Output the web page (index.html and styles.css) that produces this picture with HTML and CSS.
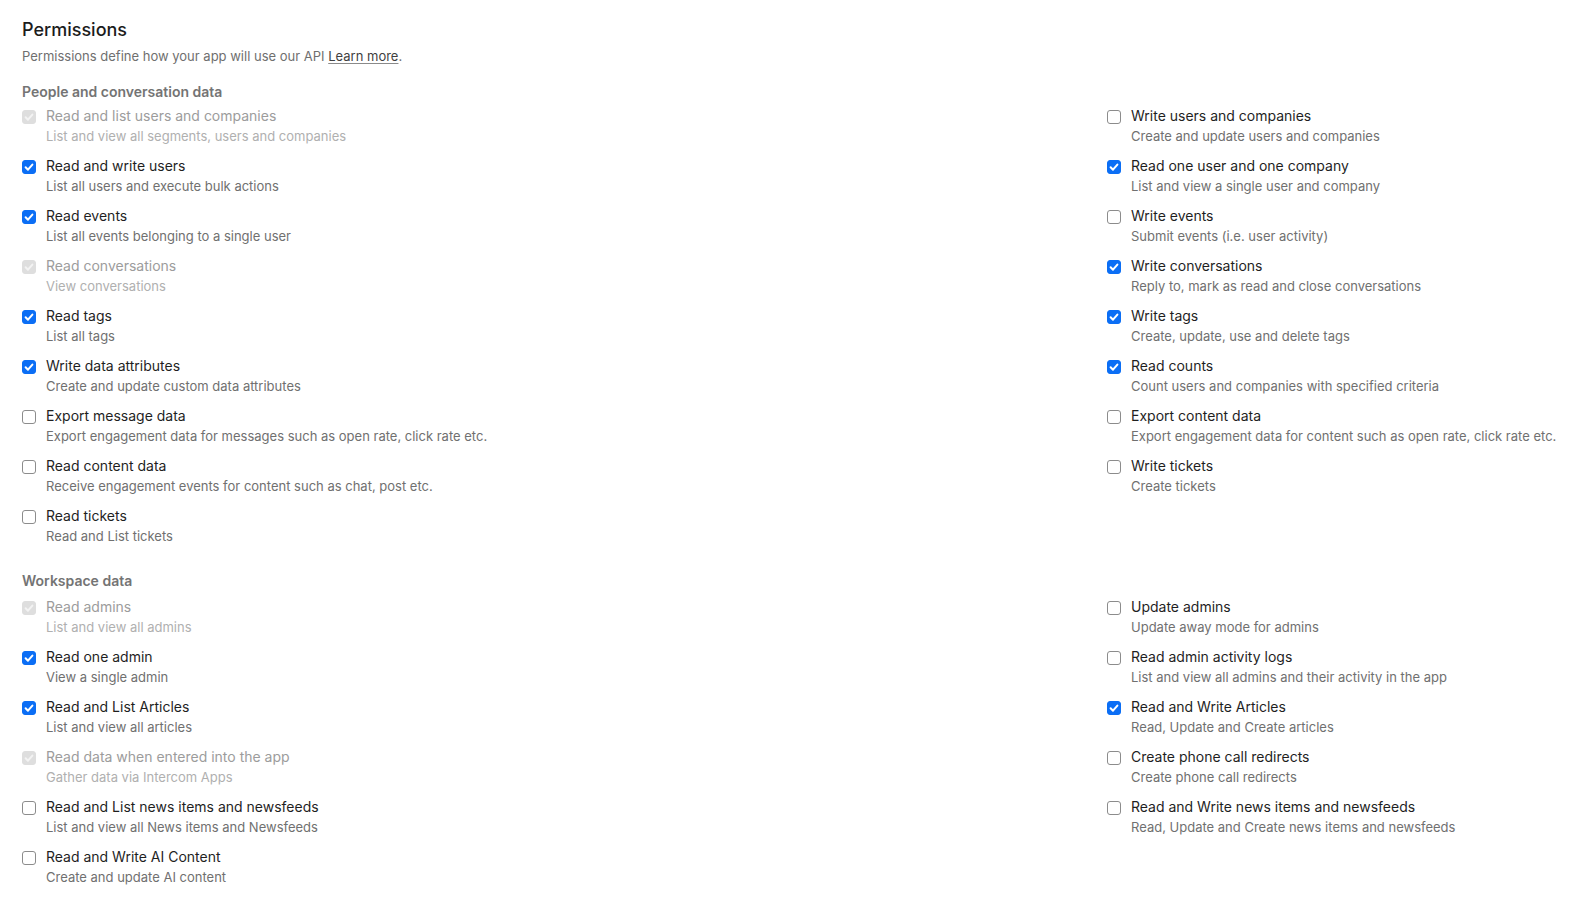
FILE: index.html
```html
<!DOCTYPE html>
<html lang="en">
<head>
<meta charset="utf-8">
<title>Permissions</title>
<link rel="stylesheet" href="styles.css">
</head>
<body>
<main class="page">
  <h1 class="title">Permissions</h1>
  <p class="subtitle">Permissions define how your app will use our API <a href="#" class="link">Learn more</a>.</p>

  <section class="section">
    <h2 class="section-title">People and conversation data</h2>
    <div class="grid">
      <div class="col">
        <div class="item disabled"><span class="box checked"><svg viewBox="0 0 14 14"><path d="M3.6 7.3 L6 9.7 L10.4 4.6"/></svg></span><div class="text"><div class="label">Read and list users and companies</div><div class="desc">List and view all segments, users and companies</div></div></div>
        <div class="item"><span class="box checked"><svg viewBox="0 0 14 14"><path d="M3.6 7.3 L6 9.7 L10.4 4.6"/></svg></span><div class="text"><div class="label">Read and write users</div><div class="desc">List all users and execute bulk actions</div></div></div>
        <div class="item"><span class="box checked"><svg viewBox="0 0 14 14"><path d="M3.6 7.3 L6 9.7 L10.4 4.6"/></svg></span><div class="text"><div class="label">Read events</div><div class="desc">List all events belonging to a single user</div></div></div>
        <div class="item disabled"><span class="box checked"><svg viewBox="0 0 14 14"><path d="M3.6 7.3 L6 9.7 L10.4 4.6"/></svg></span><div class="text"><div class="label">Read conversations</div><div class="desc">View conversations</div></div></div>
        <div class="item"><span class="box checked"><svg viewBox="0 0 14 14"><path d="M3.6 7.3 L6 9.7 L10.4 4.6"/></svg></span><div class="text"><div class="label">Read tags</div><div class="desc">List all tags</div></div></div>
        <div class="item"><span class="box checked"><svg viewBox="0 0 14 14"><path d="M3.6 7.3 L6 9.7 L10.4 4.6"/></svg></span><div class="text"><div class="label">Write data attributes</div><div class="desc">Create and update custom data attributes</div></div></div>
        <div class="item"><span class="box"></span><div class="text"><div class="label">Export message data</div><div class="desc">Export engagement data for messages such as open rate, click rate etc.</div></div></div>
        <div class="item"><span class="box"></span><div class="text"><div class="label">Read content data</div><div class="desc">Receive engagement events for content such as chat, post etc.</div></div></div>
        <div class="item"><span class="box"></span><div class="text"><div class="label">Read tickets</div><div class="desc">Read and List tickets</div></div></div>
      </div>
      <div class="col">
        <div class="item"><span class="box"></span><div class="text"><div class="label">Write users and companies</div><div class="desc">Create and update users and companies</div></div></div>
        <div class="item"><span class="box checked"><svg viewBox="0 0 14 14"><path d="M3.6 7.3 L6 9.7 L10.4 4.6"/></svg></span><div class="text"><div class="label">Read one user and one company</div><div class="desc">List and view a single user and company</div></div></div>
        <div class="item"><span class="box"></span><div class="text"><div class="label">Write events</div><div class="desc">Submit events (i.e. user activity)</div></div></div>
        <div class="item"><span class="box checked"><svg viewBox="0 0 14 14"><path d="M3.6 7.3 L6 9.7 L10.4 4.6"/></svg></span><div class="text"><div class="label">Write conversations</div><div class="desc">Reply to, mark as read and close conversations</div></div></div>
        <div class="item"><span class="box checked"><svg viewBox="0 0 14 14"><path d="M3.6 7.3 L6 9.7 L10.4 4.6"/></svg></span><div class="text"><div class="label">Write tags</div><div class="desc">Create, update, use and delete tags</div></div></div>
        <div class="item"><span class="box checked"><svg viewBox="0 0 14 14"><path d="M3.6 7.3 L6 9.7 L10.4 4.6"/></svg></span><div class="text"><div class="label">Read counts</div><div class="desc">Count users and companies with specified criteria</div></div></div>
        <div class="item"><span class="box"></span><div class="text"><div class="label">Export content data</div><div class="desc">Export engagement data for content such as open rate, click rate etc.</div></div></div>
        <div class="item"><span class="box"></span><div class="text"><div class="label">Write tickets</div><div class="desc">Create tickets</div></div></div>
      </div>
    </div>
  </section>

  <section class="section">
    <h2 class="section-title">Workspace data</h2>
    <div class="grid">
      <div class="col">
        <div class="item disabled"><span class="box checked"><svg viewBox="0 0 14 14"><path d="M3.6 7.3 L6 9.7 L10.4 4.6"/></svg></span><div class="text"><div class="label">Read admins</div><div class="desc">List and view all admins</div></div></div>
        <div class="item"><span class="box checked"><svg viewBox="0 0 14 14"><path d="M3.6 7.3 L6 9.7 L10.4 4.6"/></svg></span><div class="text"><div class="label">Read one admin</div><div class="desc">View a single admin</div></div></div>
        <div class="item"><span class="box checked"><svg viewBox="0 0 14 14"><path d="M3.6 7.3 L6 9.7 L10.4 4.6"/></svg></span><div class="text"><div class="label">Read and List Articles</div><div class="desc">List and view all articles</div></div></div>
        <div class="item disabled"><span class="box checked"><svg viewBox="0 0 14 14"><path d="M3.6 7.3 L6 9.7 L10.4 4.6"/></svg></span><div class="text"><div class="label">Read data when entered into the app</div><div class="desc">Gather data via Intercom Apps</div></div></div>
        <div class="item"><span class="box"></span><div class="text"><div class="label">Read and List news items and newsfeeds</div><div class="desc">List and view all News items and Newsfeeds</div></div></div>
        <div class="item"><span class="box"></span><div class="text"><div class="label">Read and Write AI Content</div><div class="desc">Create and update AI content</div></div></div>
      </div>
      <div class="col">
        <div class="item"><span class="box"></span><div class="text"><div class="label">Update admins</div><div class="desc">Update away mode for admins</div></div></div>
        <div class="item"><span class="box"></span><div class="text"><div class="label">Read admin activity logs</div><div class="desc">List and view all admins and their activity in the app</div></div></div>
        <div class="item"><span class="box checked"><svg viewBox="0 0 14 14"><path d="M3.6 7.3 L6 9.7 L10.4 4.6"/></svg></span><div class="text"><div class="label">Read and Write Articles</div><div class="desc">Read, Update and Create articles</div></div></div>
        <div class="item"><span class="box"></span><div class="text"><div class="label">Create phone call redirects</div><div class="desc">Create phone call redirects</div></div></div>
        <div class="item"><span class="box"></span><div class="text"><div class="label">Read and Write news items and newsfeeds</div><div class="desc">Read, Update and Create news items and newsfeeds</div></div></div>
      </div>
    </div>
  </section>
</main>
</body>
</html>
```

FILE: styles.css
```css
* { box-sizing: border-box; }

html, body {
  margin: 0;
  padding: 0;
  background: #ffffff;
}

body {
  font-family: Inter, "Noto Sans", "Liberation Sans", sans-serif;
  color: #1f1f1f;
  -webkit-font-smoothing: antialiased;
}

.page {
  padding: 17.5px 22px 20px 22px;
}

.title {
  margin: 0;
  font-size: 18px;
  line-height: 24px;
  font-weight: 500;
  color: #1c1c1c;
}

.subtitle {
  margin: 4.5px 0 0 0;
  font-size: 13px;
  line-height: 20px;
  color: #6f6f6f;
}

.link {
  color: #3f3f3f;
  text-decoration: underline;
  text-underline-offset: 2px;
  text-decoration-color: #8a8a8a;
}

.section {
  margin-top: 15.5px;
}

.section + .section {
  margin-top: 25px;
}

.section-title {
  margin: 0 0 4.5px 0;
  font-size: 14px;
  line-height: 20px;
  font-weight: 600;
  color: #747474;
}

.section + .section .section-title {
  margin-bottom: 5.5px;
}

.grid {
  display: grid;
  grid-template-columns: 1085px auto;
}

.col {
  display: flex;
  flex-direction: column;
  gap: 10px;
}

.item {
  display: flex;
  align-items: flex-start;
  gap: 10px;
}

.box {
  flex: 0 0 auto;
  width: 14px;
  height: 14px;
  margin-top: 4px;
  border: 1.5px solid #8c8c8c;
  border-radius: 3px;
  background: #ffffff;
  display: flex;
  align-items: center;
  justify-content: center;
}

.box svg {
  width: 14px;
  height: 14px;
  flex: 0 0 auto;
  fill: none;
  stroke: #ffffff;
  stroke-width: 2;
  stroke-linecap: round;
  stroke-linejoin: round;
}

.box.checked {
  background: #0b6ef5;
  border-color: #0b6ef5;
}

.item.disabled .box.checked {
  background: #dedede;
  border-color: #dedede;
}

.item.disabled .box svg {
  stroke: #f3f3f3;
}

.label {
  font-size: 14px;
  line-height: 20px;
  color: #1f1f1f;
}

.desc {
  font-size: 13px;
  line-height: 20px;
  color: #707070;
}

.item.disabled .label {
  color: #9c9c9c;
}

.item.disabled .desc {
  color: #b0b0b0;
}
```
